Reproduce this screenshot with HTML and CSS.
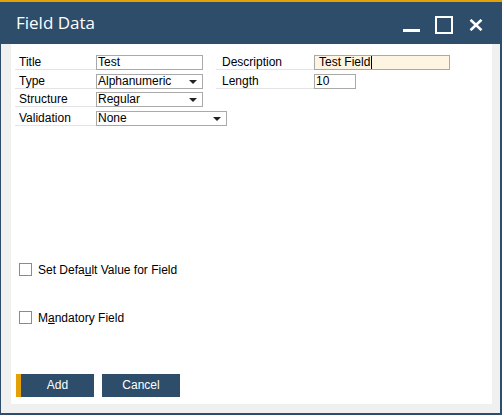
FILE: index.html
```html
<!DOCTYPE html>
<html>
<head>
<meta charset="utf-8">
<link rel="stylesheet" href="styles.css">
</head>
<body>
<div class="window">
  <div class="titlebar">
    <span class="title">Field Data</span>
    <div class="controls">
      <span class="ctl-min"></span>
      <span class="ctl-max"></span>
      <svg class="ctl-close" width="14" height="12" viewBox="0 0 14 12"><path d="M1.5 0.8 L12.5 11.2 M12.5 0.8 L1.5 11.2" stroke="#fff" stroke-width="2.6"/></svg>
    </div>
  </div>
  <div class="frame">
    <div class="panel">
      <div class="form">
        <div class="row">
          <div class="label l1">Title</div>
          <div class="box w106">Test</div>
          <div class="label l2">Description</div>
          <div class="box w135 active">Test Field<span class="caret"></span></div>
        </div>
        <div class="row">
          <div class="label l1">Type</div>
          <div class="box w106 select">Alphanumeric<span class="arrow"></span></div>
          <div class="label l2">Length</div>
          <div class="box w42">10</div>
        </div>
        <div class="row">
          <div class="label l1">Structure</div>
          <div class="box w106 select">Regular<span class="arrow"></span></div>
        </div>
        <div class="row">
          <div class="label l1">Validation</div>
          <div class="box w130 select">None<span class="arrow"></span></div>
        </div>
      </div>
      <div class="check c1"><span class="cb"></span><span>Set Defa<u>u</u>lt Value for Field</span></div>
      <div class="check c2"><span class="cb"></span><span>M<u>a</u>ndatory Field</span></div>
      <div class="buttons">
        <div class="btn primary">Add</div>
        <div class="btn">Cancel</div>
      </div>
    </div>
  </div>
</div>
</body>
</html>
```
FILE: styles.css
```css
html, body { margin: 0; padding: 0; }
body {
  width: 502px; height: 415px; overflow: hidden;
  font-family: "Liberation Sans", Arial, sans-serif;
  font-size: 12px; color: #000;
}
.window {
  width: 502px; height: 415px; box-sizing: border-box;
  border-top: 2px solid #e3a007;
  display: flex; flex-direction: column;
}
.titlebar {
  height: 42px; flex: none; background: #2d4d6b;
  display: flex; align-items: center; justify-content: space-between;
  color: #fff;
}
.title {
  font-family: "Open Sans", "Noto Sans", sans-serif;
  font-size: 17px; padding-left: 16px; margin-top: -1px;
}
.controls { display: flex; align-items: center; padding-right: 19px; height: 100%; }
.ctl-min { width: 17px; height: 3px; background: #fff; margin-top: 15px; margin-right: 15px; }
.ctl-max { width: 14px; height: 14px; border: 2px solid #fff; margin-top: 3px; margin-right: 16px; }
.ctl-close { margin-top: 3px; }
.frame {
  flex: 1; background: #f0f0f0;
  border-left: 1px solid #2d4d6b; border-right: 2px solid #2d4d6b; border-bottom: 2px solid #2d4d6b;
  padding: 0 8px 9px 10px;
  display: flex;
}
.panel {
  flex: 1; background: #fff;
  padding: 10px 0 0 4px;
  display: flex; flex-direction: column;
}
.form { display: flex; flex-direction: column; gap: 2.6px; }
.row { display: flex; height: 16px; align-items: flex-start; }
.label {
  box-sizing: border-box; height: 16px; border-bottom: 1px solid #e4e4e4;
  line-height: 16px; padding-left: 4px;
}
.l1 { width: 81px; }
.l2 { width: 98px; margin-left: 13px; padding-left: 6px; }
.box {
  box-sizing: border-box; height: 15px; border: 1px solid #a9a9a9;
  line-height: 13px; padding-left: 1px; position: relative; background: #fff;
  margin-top: 1px;
}
.w106 { width: 107px; }
.w130 { width: 131px; }
.w135 { width: 136px; }
.w42 { width: 42px; }
.active { background: #fdf4e1; padding-left: 4px; }
.caret { display: inline-block; width: 1px; height: 13px; background: #000; vertical-align: top; margin-left: 1px; }
.arrow {
  position: absolute; right: 5px; top: 5px;
  border-left: 4px solid transparent; border-right: 4px solid transparent;
  border-top: 4px solid #222;
}
.check { display: flex; align-items: center; gap: 6px; padding-left: 4px; }
.c1 { margin-top: 137px; }
.c2 { margin-top: 34px; }
.cb { width: 11px; height: 11px; border: 1px solid #8b8b8b; background: #fff; }
.buttons { display: flex; gap: 8px; margin-top: 49px; padding-left: 1px; }
.btn {
  width: 78px; height: 23px; background: #2d4d6b; color: #fff;
  display: flex; align-items: center; justify-content: center; box-sizing: border-box;
}
.primary { border-left: 5px solid #e3a007; }
```
